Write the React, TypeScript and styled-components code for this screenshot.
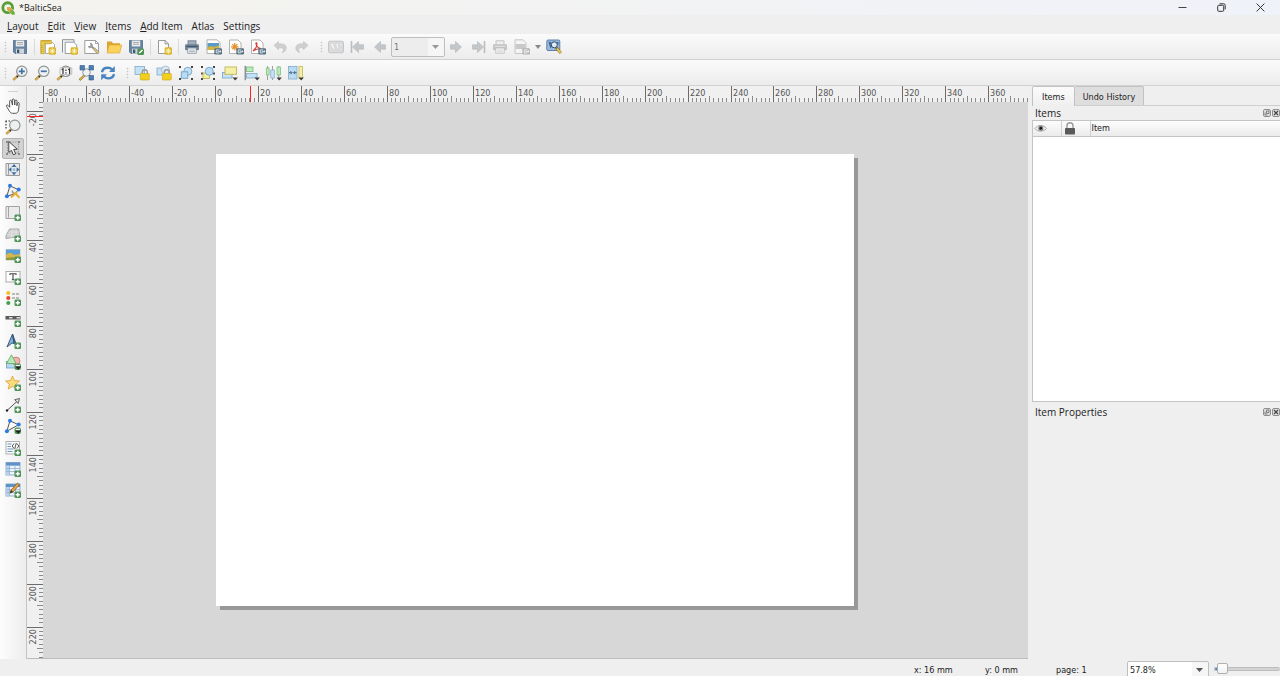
import React, { useLayoutEffect, useRef, useState } from "react";
import styled, { createGlobalStyle, css } from "styled-components";

const ui = '"Open Sans", "Noto Sans", sans-serif';
const small = '"DejaVu Sans Condensed", "DejaVu Sans", sans-serif';

const Global = createGlobalStyle`
  * { box-sizing: border-box; }
  body { margin: 0; background: #efefef; color: #222; font: 10px/14px ${ui}; }
  button, select, input { font: inherit; color: inherit; margin: 0; padding: 0; }
`;

/* ---------- layout ---------- */
const Window = styled.div`
  display: flex;
  flex-direction: column;
  min-height: 100vh;
  overflow: hidden;
`;
const TitleBar = styled.header`
  display: flex;
  align-items: center;
  height: 15px;
  padding-left: 1px;
  background: linear-gradient(90deg, #f4f3ee, #f0f2f9);
`;
const Title = styled.h1`
  flex: 1;
  margin: 0;
  padding-left: 4px;
  font-size: 9px;
  font-weight: 400;
`;
const WindowButton = styled.button`
  display: grid;
  place-items: center;
  width: 39px;
  height: 15px;
  border: 0;
  background: none;
`;
const MenuBar = styled.nav`
  display: flex;
  gap: 9px;
  height: 19px;
  padding: 4px 7px 1px;
`;
const MenuItem = styled.button`
  border: 0;
  background: none;
  line-height: 14px;
`;
const MenuKey = styled.u`
  text-underline-offset: 1px;
`;
const Toolbar = styled.div`
  display: flex;
  gap: 3px;
  height: 26px;
  border-bottom: 1px solid #d2d2d2;
  background: linear-gradient(#fbfbfb, #ececec);
`;
const ToolGroup = styled.div`
  display: flex;
  align-items: center;
`;
const Grip = styled.span`
  width: 9px;
  height: 14px;
  background: radial-gradient(#c9c9c9 40%, transparent 50%) 0 0 / 3px 3px content-box;
  padding: 1px 2px 1px 4px;
`;
const Separator = styled.span`
  width: 3px;
  height: 16px;
  border-left: 1px solid #dadada;
  margin-left: 3px;
`;
const IconButton = styled.button<{ $active?: boolean; $narrow?: boolean; $height?: number }>`
  display: grid;
  place-items: center;
  width: ${(p) => (p.$narrow ? 10 : 22)}px;
  height: ${(p) => p.$height ?? 22}px;
  border: 1px solid transparent;
  border-radius: 2px;
  background: none;
  ${(p) =>
    p.$active &&
    css`
      background: #d2d2d2;
      border-color: #b4b4b4;
    `}
`;
const Svg = styled.svg`
  display: block;
  overflow: visible;
`;
const Main = styled.main`
  flex: 1;
  display: flex;
`;
const SideTools = styled.div`
  width: 27px;
  border-right: 1px solid #c4c4c4;
  background: linear-gradient(90deg, #fdfdfd, #ededed);
`;
const SideGrip = styled.div`
  height: 9px;
  margin: 0 8px;
  background: radial-gradient(#d2d2d2 40%, transparent 50%) 0 0 / 2px 3px content-box;
  padding: 4px 0 2px;
`;
const SideList = styled.div`
  display: grid;
  grid-template-rows: repeat(19, 1fr);
  align-items: center;
  justify-content: center;
  height: 406px;
`;
const Workspace = styled.section`
  flex: 1;
  display: grid;
  grid-template: 16px 1fr / 16px 1fr;
  min-width: 0;
  border-bottom: 1px solid #bcbcbc;
`;
const RulerCorner = styled.div`
  background: #efefef;
`;
const RulerBox = styled.div<{ $vertical?: boolean }>`
  overflow: hidden;
  background: #f0f0f0;
  ${(p) => (p.$vertical ? "height: 0; min-height: 100%;" : "width: 0; min-width: 100%;")}
`;
const RulerSvg = styled.svg`
  display: block;
  font: 9px ${small};
  fill: #555;
`;
const Canvas = styled.div`
  padding: 52px 20px 52px 173px;
  background: #d7d7d7;
`;
const Paper = styled.div`
  width: 638px;
  height: 452px;
  background: #fff;
  box-shadow: 4px 4px 0 #989898;
`;
const Panels = styled.aside`
  display: flex;
  flex-direction: column;
  width: 252px;
  padding-left: 4px;
`;
const Tabs = styled.div`
  display: flex;
  align-items: flex-end;
  height: 20px;
  border-bottom: 1px solid #cfcfcf;
`;
const Tab = styled.button<{ $active?: boolean }>`
  height: ${(p) => (p.$active ? 20 : 19)}px;
  margin-bottom: ${(p) => (p.$active ? -1 : 0)}px;
  padding: 1px ${(p) => (p.$active ? 9 : 8)}px 0;
  border: 1px solid #c2c2c2;
  border-bottom: 0;
  border-left-width: ${(p) => (p.$active ? 1 : 0)}px;
  border-radius: 2px 2px 0 0;
  background: ${(p) => (p.$active ? "linear-gradient(#fbfbfb, #efefef)" : "#dedede")};
  font: 9px/14px ${small};
`;
const PanelHeader = styled.div`
  display: flex;
  align-items: center;
  gap: 1px;
  height: 14px;
  padding-left: 3px;
`;
const PanelTitle = styled.h2`
  flex: 1;
  margin: 0;
  font: 10px/14px ${ui};
`;
const PanelButton = styled.button`
  display: grid;
  place-items: center;
  width: 8px;
  height: 8px;
  border: 1px solid #8d8d8d;
  border-radius: 2px;
  background: #e2e2e2;
`;
const ItemsBox = styled.div`
  height: 282px;
  border: 1px solid #c4c4c4;
  border-right: 0;
  background: #fff;
`;
const ItemsTable = styled.table`
  width: 100%;
  border-collapse: collapse;
  table-layout: fixed;
  font: 9px/14px ${small};
`;
const HeadCell = styled.th<{ $width?: number }>`
  ${(p) => p.$width && `width: ${p.$width}px;`}
  height: 15px;
  padding: 0 1px;
  border-right: 1px solid #d0d0d0;
  border-bottom: 1px solid #c4c4c4;
  background: linear-gradient(#fdfdfd, #ebebeb);
  font-weight: 400;
  text-align: left;
  &:last-child { border-right: 0; }
`;
const Splitter = styled.div`
  width: 12px;
  height: 3px;
  margin: 0 auto;
  padding: 1px 0 0;
  background: radial-gradient(#bdbdbd 40%, transparent 50%) 0 0 / 2px 2px content-box;
`;
const StatusBar = styled.footer`
  display: flex;
  justify-content: flex-end;
  height: 17px;
  padding-top: 2px;
  overflow: hidden;
  font: 9px/18px ${small};
`;
const StatusText = styled.span<{ $width: number }>`
  width: ${(p) => p.$width}px;
  flex: none;
`;
const ComboBox = styled.label<{ $width: number; $height: number; $dim?: boolean }>`
  position: relative;
  flex: none;
  width: ${(p) => p.$width}px;
  height: ${(p) => p.$height}px;
  border: 1px solid #bebebe;
  border-radius: 2px;
  background: ${(p) => (p.$dim ? "linear-gradient(90deg, #ededed 70%, #f6f6f6 70%)" : "linear-gradient(90deg, #fff 80%, #f6f6f6 80%)")};
  color: ${(p) => (p.$dim ? "#777" : "#222")};
  font: 9px/14px ${small};
`;
const Select = styled.select`
  appearance: none;
  display: block;
  width: 100%;
  height: 100%;
  padding-left: 2px;
  border: 0;
  background: none;
  opacity: 1;
`;
const ComboArrow = styled.svg`
  position: absolute;
  right: 5px;
  top: calc(50% - 2px);
  pointer-events: none;
`;
const ZoomSlider = styled.input`
  appearance: none;
  flex: none;
  width: 66px;
  height: 16px;
  margin: 0 0 0 5px;
  background: none;
  &::-webkit-slider-runnable-track {
    height: 4px;
    border: 1px solid #bdbdbd;
    border-right: 0;
    border-radius: 2px;
    background: linear-gradient(90deg, #2f8ad8 6px, #d2d2d2 6px);
  }
  &::-webkit-slider-thumb {
    appearance: none;
    width: 11px;
    height: 11px;
    margin-top: -5px;
    border: 1px solid #b0b0b0;
    border-radius: 2px;
    background: linear-gradient(#fff, #f1f1f1);
  }
`;

/* ---------- icon parts ---------- */
const Plus = () => (
  <g>
    <rect x="9.5" y="9.5" width="6.5" height="6.5" rx="1.3" fill="#4e9258" />
    <path d="M12.75 10.7v4.1M10.7 12.75h4.1" stroke="#fff" strokeWidth="1.5" />
  </g>
);
const GreenDrop = () => (
  <g>
    <rect x="9.5" y="9.5" width="6.5" height="6.5" rx="2" fill="#4e9258" />
    <path d="M10.7 11.5h4.2" stroke="#fff" strokeWidth="1.3" />
    <path d="M10.2 12.6h6l-3 3.2z" fill="#222" />
  </g>
);
const Star = () => (
  <g>
    <rect x="8.6" y="8.3" width="7.4" height="7.4" rx="1.4" fill="#d9b62c" />
    <path d="M12.3 9.2v5.6M9.5 12h5.6M10.3 10l4 4M14.3 10l-4 4" stroke="#fff8cf" strokeWidth=".9" />
  </g>
);
const Export = ({ c = "#546f82" }: { c?: string }) => (
  <g>
    <rect x="8.3" y="9.3" width="7.7" height="6.2" rx="1.2" fill={c} />
    <path d="M13 10.9h-2.8v3h2.8M11.6 12.4h3.2M13.7 11l1.4 1.4-1.4 1.4" fill="none" stroke="#fff" strokeWidth=".8" />
  </g>
);
const Sheet = ({ s = "#8e8e8e" }: { s?: string }) => (
  <path d="M2.5 1.5h6.7l3.3 3.3v9.7h-10zM9 1.5v3.4h3.5" fill="#fff" stroke={s} strokeWidth=".9" />
);
const Lens = ({ children }: { children?: React.ReactNode }) => (
  <g>
    <path d="M5.6 9.8l1.2 1.2-4.6 4.4-1.4-1.3z" fill="#e2b33c" stroke="#8d7330" strokeWidth=".5" />
    <path d="M4.6 10.8L6 12.2" stroke="#333" strokeWidth="1.4" />
    <circle cx="9.8" cy="6.3" r="5.2" fill="#eef1f2" stroke="#8f9494" strokeWidth="1.2" />
    {children}
  </g>
);
const Drop = () => <path d="M10.500 12.500h5.400l-2.700 3z" fill="#3c3c3c" />;
const Corners = ({ c = "#444" }: { c?: string }) => (
  <path d="M1 1h2v2H1zM13 1h2v2h-2zM1 13h2v2H1zM13 13h2v2h-2z" fill={c} />
);
const Floppy = () => (
  <g>
    <path d="M1.500 1.500h13v13h-11.500l-1.500-1.500z" fill="#6785a3" stroke="#4f6b87" strokeWidth=".8" />
    <rect x="3.800" y="1.500" width="8.400" height="6" fill="#e9ecec" />
    <path d="M5 3.500h6M5 5.300h6" stroke="#9a9a9a" strokeWidth=".8" />
    <rect x="4" y="9.700" width="8" height="5" fill="#cfd6db" />
    <rect x="5" y="10.500" width="2.300" height="3.500" fill="#3e5973" />
  </g>
);
const Printer = ({ dim }: { dim?: boolean }) => (
  <g>
    <rect x="4" y="1.800" width="8" height="4.500" fill={dim ? "#eee" : "#a3b0ba"} stroke={dim ? "#bbb" : "#667a8c"} strokeWidth=".8" />
    <rect x="1" y="5.300" width="14" height="6" rx="1.200" fill={dim ? "#c4c4c4" : "#6f8498"} />
    <path d="M2.500 7.400h11" stroke={dim ? "#e6e6e6" : "#3d5266"} />
    <rect x="3.800" y="9" width="8.400" height="5.200" fill="#f6f6f6" stroke={dim ? "#bbb" : "#7a8b99"} strokeWidth=".8" />
    <path d="M5.200 11h5.600M5.200 12.600h5.600" stroke={dim ? "#ccc" : "#8d9aa5"} strokeWidth=".7" />
  </g>
);
const Padlock = () => (
  <g>
    <path d="M8.300 9V7.300a2.500 2.500 0 015 0V9" fill="none" stroke="#9a9a9a" strokeWidth="1.400" />
    <rect x="6.300" y="8.500" width="9" height="6.500" rx=".8" fill="#f3cf1d" stroke="#c9a50e" strokeWidth=".6" />
  </g>
);
const Arrow = ({ flip, bar }: { flip?: boolean; bar?: boolean }) => (
  <g transform={flip ? "matrix(-1 0 0 1 16 0)" : undefined}>
    <path d="M2.500 8l6-5.500v3.300h5v4.400h-5v3.300z" fill="#c3c7ca" stroke="#b3b6b8" strokeWidth=".6" />
    {bar && <path d="M1.500 2v12" stroke="#b9bdbf" strokeWidth="1.600" />}
  </g>
);
const WorldMap = () => (
  <g>
    <rect x=".5" y="2.200" width="15" height="11.600" rx="1.500" fill="#d9dbdc" stroke="#bfc1c2" strokeWidth=".9" />
    <path d="M3 4.300l3 .2-.6 2 1.300 2.300-.8 2.800-1.300-2.500L3 7zM8.500 4.500l2-.3-.5 2 1 2-1 3-1-3.200-1-1.500zM11.500 4.500h2l-.3 4-1-1z" fill="#f7f7f7" stroke="#c4c4c4" strokeWidth=".4" />
  </g>
);

const icons: Record<string, React.ReactNode> = {
  save: <Floppy />,
  newLayout: (
    <g>
      <path d="M5.500 3.500h7l2 2v9h-9z" fill="#fff" stroke="#999" strokeWidth=".8" />
      <path d="M.800 1.500h10.500v3.200H4.200v10H.800z" fill="#f0cf55" stroke="#c39d25" strokeWidth=".8" />
      <path d="M3 1.700v1.600M5 1.700v1.600M7 1.700v1.600M9 1.700v1.600M1 6.500h1.600M1 8.500h1.600M1 10.500h1.600M1 12.500h1.600" stroke="#a07e15" strokeWidth=".6" />
      <Star />
    </g>
  ),
  duplicate: (
    <g>
      <path d="M.500 13.500V.700h11.500v3" fill="#f3f4f4" stroke="#8a9196" strokeWidth="1" />
      <path d="M3.200 3.200h8.500l3 3v8.300H3.200z" fill="#fff" stroke="#8a9196" strokeWidth=".9" />
      <Star />
    </g>
  ),
  manager: (
    <g>
      <path d="M.800 1.500h10.700l3 3v10H.800z" fill="#fff" stroke="#929292" strokeWidth=".9" />
      <path d="M11.500 1.500v3h3" fill="none" stroke="#929292" strokeWidth=".8" />
      <path d="M6.200 4.200a2.300 2.300 0 11-2 3.400l2-.2.8-1.500z" fill="#a9a9a9" stroke="#777" strokeWidth=".6" />
      <path d="M8 8l2.500 2" stroke="#8b8b8b" strokeWidth="1.800" />
      <path d="M10 9.500l4.600 4.800" stroke="#9a9a9a" strokeWidth="2.800" />
      <path d="M10 9.500l4.600 4.800" stroke="#e2c46a" strokeWidth="1.300" />
    </g>
  ),
  open: (
    <g>
      <path d="M1 2.500h4.500L7 4.200h7V13H1z" fill="#dba52f" />
      <path d="M3.200 6h12.500l-2 8H1z" fill="#fbd25e" stroke="#dca935" strokeWidth=".7" />
    </g>
  ),
  saveTemplate: (
    <g>
      <Floppy />
      <rect x="9.300" y="9.500" width="6.700" height="6.500" rx="1.300" fill="#4e9258" />
      <path d="M10.800 14.500l.5-1.600 2.700-2.500 1 1-2.700 2.500z" fill="#fff" />
    </g>
  ),
  newPage: <g><Sheet /><Star /></g>,
  print: <Printer />,
  exportImage: (
    <g>
      <path d="M1 .800h10l3 3v10.700H1z" fill="#fff" stroke="#a0a0a0" strokeWidth=".8" />
      <rect x="1.500" y="4" width="11.500" height="7" fill="#5d9bc7" />
      <path d="M1.500 8.500l3-1.500 3.500 1 5-1.500V11H1.500z" fill="#d3b544" />
      <Export />
    </g>
  ),
  exportSvg: (
    <g>
      <path d="M1.500 1h8.500l3 3v10.500H1.500z" fill="#fff" stroke="#a0a0a0" strokeWidth=".8" />
      <path d="M6.800 4v7.500M3 7.800h7.600M4.200 5.100l5.200 5.200M9.400 5.100l-5.200 5.200" stroke="#e8912c" strokeWidth="1.300" />
      <Export />
    </g>
  ),
  exportPdf: (
    <g>
      <path d="M1.500 1h8.500l3 3v10.500H1.500z" fill="#fff" stroke="#a0a0a0" strokeWidth=".8" />
      <path d="M3 12c2.300-1.800 4-4.800 3.900-7.500 0-1-1.100-1-1 0 .4 2.500 2.100 4.500 5.100 5-2.500 0-5.500.9-8 2.500z" fill="none" stroke="#d5392f" strokeWidth="1.100" />
      <Export />
    </g>
  ),
  undo: <path d="M2 6.300L6.500 2.500v2.400h3.200c3 0 4.500 2 4.500 4.200 0 2.300-1.700 4-4.200 4.400 1.300-1 1.700-2 1.400-3-.2-1.200-1-1.700-2.200-1.700H6.500v2z" fill="#cfcfcf" stroke="#bdbdbd" strokeWidth=".6" />,
  redo: <path d="M14 6.300L9.500 2.500v2.400H6.300c-3 0-4.500 2-4.500 4.200 0 2.300 1.700 4 4.200 4.400-1.300-1-1.700-2-1.400-3 .2-1.200 1-1.700 2.200-1.700h2.700v2z" fill="#cfcfcf" stroke="#bdbdbd" strokeWidth=".6" />,
  atlas: <WorldMap />,
  first: <Arrow bar />,
  previous: <Arrow />,
  next: <Arrow flip />,
  last: <Arrow flip bar />,
  printAtlas: <Printer dim />,
  exportAtlas: (
    <g>
      <path d="M1 .800h8l3 3v10.700H1z" fill="#f4f4f4" stroke="#bbb" strokeWidth=".8" />
      <rect x="1.500" y="5" width="10" height="5" fill="#c9c9c9" />
      <Export c="#b4b4b4" />
    </g>
  ),
  atlasSettings: (
    <g>
      <rect x=".8" y="1" width="13" height="10.500" rx="1.200" fill="#9dbade" stroke="#4d77a8" strokeWidth=".9" />
      <path d="M2.500 2.800l3 .2-.8 2 1 3-1.200 1.500-1-3zM10 3h2.500v3z" fill="#40658f" />
      <circle cx="8.300" cy="5.800" r="3" fill="#dfe9f3" stroke="#2f4d6e" strokeWidth="1" />
      <path d="M10.200 8.500l4.600 5.700" stroke="#857030" strokeWidth="2.800" />
      <path d="M11 9.500l3.700 4.600" stroke="#edc957" strokeWidth="1.800" />
    </g>
  ),
  zoomIn: <Lens><path d="M9.800 3.300v6M6.800 6.300h6" stroke="#4373a6" strokeWidth="1.700" /></Lens>,
  zoomOut: <Lens><path d="M6.800 6.300h6" stroke="#4373a6" strokeWidth="1.700" /></Lens>,
  zoomActual: (
    <Lens>
      <rect x="4" y="2.600" width="11.800" height="7" rx="1" fill="#f7f7f7" stroke="#999" strokeWidth=".6" />
      <path d="M5.600 4.700l1.400-.8v5M12.200 4.700l1.400-.8v5" fill="none" stroke="#333" strokeWidth="1.200" />
      <path d="M9.900 4.600v1.300M9.900 7.200v1.300" stroke="#333" strokeWidth="1.200" />
    </Lens>
  ),
  zoomFull: (
    <g>
      <path d="M4 4l9 8.500M13 4l-9 8.500" stroke="#9aaab8" />
      <circle cx="8.500" cy="7.500" r="3.800" fill="#eef1f2" stroke="#8f9494" />
      <path d="M2 .500h4.500v4.500H2zM11 .500h4.500v4.500H11zM11 10.500h4.500V15H11z" fill="#4f7eae" stroke="#2f5d8e" strokeWidth=".6" />
      <path d="M5.500 10.300l1.200 1.200-4.300 4-1.400-1.300z" fill="#e2b33c" stroke="#77642b" strokeWidth=".6" />
    </g>
  ),
  refresh: (
    <g fill="none" stroke="#4984c0" strokeWidth="2.400">
      <path d="M2 7.200C2.500 4.500 5 2.800 7.800 2.800c1.800 0 3.200.6 4.200 1.800M14 9c-.5 2.700-3 4.400-5.800 4.400-1.800 0-3.200-.6-4.200-1.800" />
      <path d="M14.800 1v6H9zM1.200 15.200v-6H7z" fill="#4984c0" stroke="none" />
    </g>
  ),
  lock: (
    <g>
      <rect x="1" y="1.500" width="9.500" height="8" fill="#c5e2f5" stroke="#7faac8" strokeWidth=".8" />
      <Padlock />
    </g>
  ),
  unlock: (
    <g>
      <rect x="1" y="3" width="7" height="7" fill="#c5e2f5" stroke="#7faac8" strokeWidth=".8" />
      <circle cx="9.500" cy="5" r="4" fill="#dbeaf3" stroke="#9fb6c6" strokeWidth=".8" />
      <Padlock />
    </g>
  ),
  group: (
    <g>
      <Corners />
      <circle cx="9.800" cy="6.300" r="4" fill="#c5e2f5" stroke="#6fa3c8" strokeWidth=".9" />
      <rect x="3.300" y="6.800" width="6.500" height="6.500" fill="#b9dcf4" stroke="#6fa3c8" strokeWidth=".9" />
    </g>
  ),
  ungroup: (
    <g>
      <Corners />
      <path d="M1 7.500h2v2H1zM13 7.500h2v2h-2z" fill="#555" />
      <rect x="3" y="8" width="6.500" height="5.500" fill="#f3ee9b" stroke="#b7ae45" strokeWidth=".8" />
      <circle cx="9.300" cy="6.300" r="4" fill="#b9dcf4" stroke="#6fa3c8" strokeWidth=".9" />
    </g>
  ),
  raise: (
    <g>
      <rect x=".5" y="7.500" width="9.500" height="5.500" fill="#c5e2f5" stroke="#7faac8" strokeWidth=".9" />
      <rect x="3" y="2" width="11.500" height="7.300" fill="#f5f0a8" stroke="#c0b654" strokeWidth=".9" />
      <Drop />
    </g>
  ),
  align: (
    <g>
      <path d="M1.200 .800v14.400" stroke="#555" strokeWidth=".9" />
      <rect x="2.500" y="2" width="6.500" height="4.500" fill="#b8ecb9" stroke="#7bb77d" strokeWidth=".8" />
      <rect x="2.500" y="8.500" width="10.500" height="4.500" fill="#c5e2f5" stroke="#7faac8" strokeWidth=".8" />
      <Drop />
    </g>
  ),
  distribute: (
    <g>
      <path d="M1.500 1v14M6.500 1v14M12.700 1v14" stroke="#888" strokeWidth=".8" />
      <rect x=".3" y="3" width="2.800" height="7" fill="#b8ecb9" stroke="#7bb77d" strokeWidth=".7" />
      <rect x="4.800" y="5" width="3.500" height="8" fill="#c5e2f5" stroke="#7faac8" strokeWidth=".7" />
      <rect x="11" y="2" width="3.500" height="8" fill="#b8ecb9" stroke="#7bb77d" strokeWidth=".7" />
      <Drop />
    </g>
  ),
  resize: (
    <g>
      <rect x=".5" y="1.500" width="8.500" height="12.500" fill="#b9dcf4" stroke="#7faac8" strokeWidth=".8" />
      <path d="M1 7.700h2.500M8.500 7.700H6M2.500 6.200L4 7.700 2.500 9.200M7 6.200L5.500 7.700 7 9.200" fill="none" stroke="#34516a" strokeWidth=".9" />
      <rect x="11" y="1.500" width="3.500" height="12" fill="#f5f0a8" stroke="#c0b654" strokeWidth=".8" />
      <Drop />
    </g>
  ),
  pan: (
    <path d="M4.700 9.300L3 7.300C2.300 6.500.9 7.200 1.500 8.300l2.700 4.500c.8 1.500 1.800 2.500 3.500 2.500h2.500c2 0 3-1.200 3.300-3.200l.7-6.400c.2-1.400-1.500-1.600-1.800-.3l-.5 2.400.1-4.700c0-1.400-1.900-1.400-2 0L9.800 7 9.300 1.900C9.100.500 7.300.700 7.300 2l.2 5.100L6.500 3c-.3-1.300-2.100-.9-1.900.4z" fill="#fff" stroke="#444" strokeWidth=".9" />
  ),
  zoom: (
    <g>
      <path d="M.500 2h6M1 2v9" stroke="#333" strokeWidth="1.200" strokeDasharray="1.500 1.500" />
      <Lens />
    </g>
  ),
  select: (
    <g>
      <rect x="2.500" y="2" width="11" height="11" fill="none" stroke="#888" strokeWidth=".7" strokeDasharray="1.500 1" />
      <Corners c="#8a8a8a" />
      <path d="M3.800 1.500v10.800l2.700-2 1.900 4.500 2.300-1-2-4.300 3.500-.3z" fill="#fff" stroke="#333" strokeWidth=".9" />
    </g>
  ),
  moveContent: (
    <g>
      <path d="M3.500 1.500h11v12h-12M3.500 1.500v10.300M3.500 1.500H1v12c1.500.2 2.500-.5 2.500-1.800" fill="#e7e9ea" stroke="#8f8f8f" strokeWidth=".9" />
      <path d="M9 2.100l2.500 2.900h-5zM9 13.200l2.500-2.900h-5zM3.500 7.600l2.900-2.400V10zM14.500 7.600l-2.900-2.400V10z" fill="#3d6d9f" />
      <rect x="7.700" y="6.300" width="2.600" height="2.600" fill="#9cb9d6" />
    </g>
  ),
  editNodes: (
    <g>
      <path d="M5 2.800l8.500 4-4 4-7.700 2.500z" fill="#f2f2f2" stroke="#555" strokeWidth="1" />
      <circle cx="5" cy="2.800" r="2" fill="#2d7be0" />
      <circle cx="13.700" cy="6.500" r="2" fill="#2d7be0" />
      <circle cx="1.900" cy="13.300" r="2" fill="#2d7be0" />
      <path d="M7.500 7.500a2.400 2.400 0 003 3" fill="none" stroke="#999" strokeWidth="1.600" />
      <path d="M9.500 9.500l5 5.200M12 9l-6 5.500" stroke="#e3ae35" strokeWidth="2" />
    </g>
  ),
  addMap: (
    <g>
      <path d="M3.500 1.500h11v12h-12M3.500 1.500v10.300M3.500 1.500H1v12c1.500.2 2.500-.5 2.500-1.800" fill="#ebebeb" stroke="#9a9a9a" strokeWidth=".9" />
      <Plus />
    </g>
  ),
  add3d: (
    <g>
      <path d="M4.500 3h9.300l1 7.500L1 12.500v-3z" fill="#cfcfcf" stroke="#9a9a9a" strokeWidth=".8" />
      <path d="M3.500 6h10.700M2.300 9h12M8 3l-2 9M11 3v8" stroke="#f0f0f0" strokeWidth=".6" />
      <Plus />
    </g>
  ),
  addPicture: (
    <g>
      <rect x="1" y="2.500" width="14" height="10.500" fill="#5aa0d6" stroke="#8aa2b3" strokeWidth=".5" />
      <path d="M1 8c3-3 5-2 7-.8s4 .3 7-.2v6H1z" fill="#d8b64c" />
      <path d="M1 11c4-1 9-1 14 0v2H1z" fill="#8b9b3d" />
      <Plus />
    </g>
  ),
  addLabel: (
    <g>
      <rect x="1" y="2.500" width="14" height="10.500" fill="#fdfdfd" stroke="#a5a5a5" strokeWidth=".9" />
      <path d="M5 6V4.800h6V6M8 4.800v6M6.800 10.800h2.500" fill="none" stroke="#444" strokeWidth="1.100" />
      <Plus />
    </g>
  ),
  addLegend: (
    <g>
      <circle cx="3.300" cy="3" r="2.100" fill="#f2c12e" />
      <circle cx="3.300" cy="8" r="2.100" fill="#e04a2b" />
      <circle cx="3.300" cy="13" r="2.100" fill="#42a04e" />
      <path d="M7 4h3M11 4h3M7 8h3M11 8h3" stroke="#a5a5a5" strokeWidth="1.300" />
      <Plus />
    </g>
  ),
  addScale: (
    <g>
      <rect x=".5" y="5" width="15" height="3.500" fill="#5a5a5a" />
      <path d="M4 6.700h3.500M11.500 6.700H15" stroke="#d8d8d8" strokeWidth="1.500" />
      <Plus />
    </g>
  ),
  addNorth: (
    <g>
      <path d="M7.500 1L2 14l5-4 2 .5z" fill="#7fb2dc" stroke="#2f4f70" strokeWidth=".9" />
      <path d="M7.500 1l4.500 12-3-2.800z" fill="#3c6794" stroke="#2f4f70" strokeWidth=".8" />
      <Plus />
    </g>
  ),
  addShape: (
    <g>
      <rect x="1.500" y="7.500" width="10" height="6.500" fill="#b6d9f1" stroke="#6f9fc4" strokeWidth=".8" />
      <circle cx="11" cy="7" r="4" fill="#f1b3ad" stroke="#c9716a" strokeWidth=".8" />
      <path d="M6.500 .800l4.500 8.700H1.500z" fill="#b8e8b7" stroke="#5eaa62" strokeWidth=".8" />
      <GreenDrop />
    </g>
  ),
  addMarker: (
    <g>
      <path d="M7.500 1l2 4.600 5 .4-3.800 3.200 1.200 4.900-4.400-2.700-4.300 2.700L4.400 9.200.6 6l4.900-.4z" fill="#fbdc7c" stroke="#dba63f" strokeWidth=".9" />
      <Plus />
    </g>
  ),
  addArrow: (
    <g>
      <path d="M2 13.500L13 3.500" stroke="#555" strokeWidth="1" />
      <path d="M14.500 1.500l-1.300 5-3.500-3.800z" fill="#ddd" stroke="#444" strokeWidth=".8" />
      <circle cx="2" cy="13.500" r="1.200" fill="#222" />
      <Plus />
    </g>
  ),
  addNode: (
    <g>
      <path d="M5 2.800l8.500 4-11.700 6.500z" fill="#fafafa" stroke="#555" strokeWidth="1" />
      <circle cx="5" cy="2.800" r="2" fill="#2d7be0" />
      <circle cx="13.700" cy="6.500" r="2" fill="#2d7be0" />
      <circle cx="1.900" cy="13.300" r="2" fill="#2d7be0" />
      <GreenDrop />
    </g>
  ),
  addHtml: (
    <g>
      <rect x="1" y="1.500" width="13.500" height="12.500" fill="#fafafa" stroke="#a0a0a0" strokeWidth=".8" />
      <path d="M2.500 4h4M2.500 6.500h3.500M2.500 9h6M2.500 11.500h5" stroke="#6e96bf" strokeWidth="1.200" />
      <path d="M9 3.500L7.200 6 9 8.500M12 3.500L13.800 6 12 8.500M11.300 3L9.700 9" fill="none" stroke="#444" strokeWidth=".9" />
      <Plus />
    </g>
  ),
  addTable: (
    <g>
      <rect x="1" y="1.500" width="14" height="12.500" fill="#eef4fa" stroke="#7d9dbd" strokeWidth=".8" />
      <rect x="1" y="1.500" width="14" height="3.200" fill="#5f93c8" />
      <rect x="1" y="4.700" width="3.500" height="9.300" fill="#b9d2ea" />
      <path d="M1 7.500h14M1 10.500h14M4.500 4.700v9.300M10 4.700v9.300" stroke="#8fb0d0" strokeWidth=".8" />
      <Plus />
    </g>
  ),
  addManualTable: (
    <g>
      <rect x="1" y="2" width="14" height="12" fill="#eef4fa" stroke="#7d9dbd" strokeWidth=".8" />
      <rect x="1" y="2" width="14" height="3" fill="#5f93c8" />
      <rect x="1" y="5" width="3.500" height="9" fill="#b9d2ea" />
      <path d="M1 7.700h14M1 10.700h14M4.500 5v9M10.500 5v9" stroke="#8fb0d0" strokeWidth=".8" />
      <path d="M5 11l1-3L12.500 1l2 1.800L8 10z" fill="#e9a23f" stroke="#6f522b" strokeWidth=".7" />
      <path d="M5 11l1-3 2 2z" fill="#333" />
      <Plus />
    </g>
  ),
};

type ToolProps = { name: string; label: string; active?: boolean; disabled?: boolean; height?: number };

function Tool({ name, label, active, disabled, height }: ToolProps) {
  return (
    <IconButton aria-label={label} $active={active} $height={height} disabled={disabled}>
      <Svg width="16" height="16" viewBox="0 0 16 16" aria-hidden="true">{icons[name]}</Svg>
    </IconButton>
  );
}

/* ---------- rulers ---------- */
const PX_PER_MM = 2.148;

type RulerProps = { origin: number; from: number; cursor: number; vertical?: boolean };

function Ruler({ origin, from, cursor, vertical }: RulerProps) {
  const box = useRef<HTMLDivElement>(null);
  const [length, setLength] = useState(0);

  useLayoutEffect(() => {
    const el = box.current;
    if (!el) return;
    const measure = () => setLength(vertical ? el.clientHeight : el.clientWidth);
    measure();
    const observer = new ResizeObserver(measure);
    observer.observe(el);
    return () => observer.disconnect();
  }, [vertical]);

  const marks: React.ReactNode[] = [];
  for (let mm = from; origin + mm * PX_PER_MM < length; mm += 2) {
    const p = Math.round(origin + mm * PX_PER_MM);
    const start = mm % 20 === 0 ? 0 : mm % 10 === 0 ? 10 : 12;
    const color = start === 0 ? "#6c6c6c" : "#8a8a8a";
    marks.push(
      vertical ? (
        <rect key={mm} x={start} y={p} width={16 - start} height="1" fill={color} />
      ) : (
        <rect key={mm} x={p} y={start} width="1" height={16 - start} fill={color} />
      ),
    );
    if (start === 0 && p + 20 < length) {
      marks.push(
        vertical ? (
          <text key={`t${mm}`} transform={`translate(9 ${p + 2}) rotate(-90)`} textAnchor="end">{mm}</text>
        ) : (
          <text key={`t${mm}`} x={p + 2} y="10">{mm}</text>
        ),
      );
    }
  }
  return (
    <RulerBox ref={box} $vertical={vertical}>
      <RulerSvg width={vertical ? 16 : length} height={vertical ? length : 16}>
        {marks}
        {vertical ? (
          <rect y={cursor} width="16" height="1" fill="#f22" />
        ) : (
          <rect x={cursor} width="1" height="16" fill="#f22" />
        )}
      </RulerSvg>
    </RulerBox>
  );
}

const PanelControls = () => (
  <>
    <PanelButton aria-label="Float panel">
      <svg width="6" height="6" viewBox="0 0 6 6"><path d="M2.500 1h2.500v2.500H2.500zM1 2.500V5h2.500" fill="none" stroke="#666" strokeWidth=".8" /></svg>
    </PanelButton>
    <PanelButton aria-label="Close panel">
      <svg width="6" height="6" viewBox="0 0 6 6"><path d="M1 1l4 4M5 1L1 5" stroke="#444" strokeWidth="1.200" /></svg>
    </PanelButton>
  </>
);

const menus: [string, boolean][] = [
  ["Layout", true], ["Edit", true], ["View", true], ["Items", true],
  ["Add Item", true], ["Atlas", false], ["Settings", false],
];

const sideTools: [string, string][] = [
  ["pan", "Pan layout"], ["zoom", "Zoom"], ["select", "Select/Move item"], ["moveContent", "Move item content"],
  ["editNodes", "Edit nodes item"], ["addMap", "Add map"], ["add3d", "Add 3D map"], ["addPicture", "Add picture"],
  ["addLabel", "Add label"], ["addLegend", "Add legend"], ["addScale", "Add scale bar"], ["addNorth", "Add north arrow"],
  ["addShape", "Add shape"], ["addMarker", "Add marker"], ["addArrow", "Add arrow"], ["addNode", "Add node item"],
  ["addHtml", "Add HTML"], ["addTable", "Add attribute table"], ["addManualTable", "Add fixed table"],
];

export default function App() {
  return (
    <Window>
      <Global />
      <TitleBar>
        <Svg width="14" height="14" viewBox="0 0 14 14" aria-hidden="true">
          <circle cx="6.700" cy="6.700" r="4.900" fill="none" stroke="#5a9e3a" strokeWidth="2.900" />
          <path d="M6 6h3l5 5.200V14h-2.800L6 8.700z" fill="#6fb13f" stroke="#f4f3ee" strokeWidth=".5" />
          <path d="M6.200 6.200h2.500L11 8.600 8.700 11 6.200 8.500z" fill="#e8a33a" />
        </Svg>
        <Title>*BalticSea</Title>
        <WindowButton aria-label="Minimize">
          <svg width="9" height="9" viewBox="0 0 9 9"><path d="M.500 4.500h8" stroke="#444" /></svg>
        </WindowButton>
        <WindowButton aria-label="Restore">
          <svg width="9" height="9" viewBox="0 0 9 9" fill="none" stroke="#333"><rect x=".7" y="2.300" width="6" height="6" rx="1" /><path d="M2.500.800h4.200a1.500 1.500 0 011.500 1.500v4" /></svg>
        </WindowButton>
        <WindowButton aria-label="Close">
          <svg width="9" height="9" viewBox="0 0 9 9"><path d="M.600.600l7.800 7.800M8.400.600L.600 8.400" stroke="#333" /></svg>
        </WindowButton>
      </TitleBar>
      <MenuBar>
        {menus.map(([name, key]) => (
          <MenuItem key={name}>
            {key ? <><MenuKey>{name[0]}</MenuKey>{name.slice(1)}</> : name}
          </MenuItem>
        ))}
      </MenuBar>
      <Toolbar>
        <ToolGroup>
          <Grip />
          <Tool name="save" label="Save project" />
          <Separator />
          <Tool name="newLayout" label="New layout" />
          <Tool name="duplicate" label="Duplicate layout" />
          <Tool name="manager" label="Layout manager" />
          <Tool name="open" label="Add items from template" />
          <Tool name="saveTemplate" label="Save as template" />
          <Separator />
          <Tool name="newPage" label="Add pages" />
          <Separator />
          <Tool name="print" label="Print layout" />
          <Tool name="exportImage" label="Export as image" />
          <Tool name="exportSvg" label="Export as SVG" />
          <Tool name="exportPdf" label="Export as PDF" />
          <Tool name="undo" label="Undo" disabled />
          <Tool name="redo" label="Redo" disabled />
        </ToolGroup>
        <ToolGroup>
          <Grip />
          <Tool name="atlas" label="Preview atlas" disabled />
          <Tool name="first" label="First feature" disabled />
          <Tool name="previous" label="Previous feature" disabled />
          <ComboBox $width={54} $height={20} $dim>
            <Select aria-label="Atlas page" disabled><option>1</option></Select>
            <ComboArrow width="7" height="4" viewBox="0 0 7 4"><path d="M0 0h7L3.500 4z" fill="#999" /></ComboArrow>
          </ComboBox>
          <Tool name="next" label="Next feature" disabled />
          <Tool name="last" label="Last feature" disabled />
          <Tool name="printAtlas" label="Print atlas" disabled />
          <Tool name="exportAtlas" label="Export atlas" disabled />
          <IconButton $narrow aria-label="Export atlas options" disabled>
            <svg width="6" height="4" viewBox="0 0 6 4"><path d="M0 0h6L3 4z" fill="#888" /></svg>
          </IconButton>
          <Tool name="atlasSettings" label="Atlas settings" />
        </ToolGroup>
      </Toolbar>
      <Toolbar>
        <ToolGroup>
          <Grip />
          <Tool name="zoomIn" label="Zoom in" />
          <Tool name="zoomOut" label="Zoom out" />
          <Tool name="zoomActual" label="Zoom to 100%" />
          <Tool name="zoomFull" label="Zoom full" />
          <Tool name="refresh" label="Refresh view" />
        </ToolGroup>
        <ToolGroup>
          <Grip />
          <Tool name="lock" label="Lock selected items" />
          <Tool name="unlock" label="Unlock all items" />
          <Tool name="group" label="Group items" />
          <Tool name="ungroup" label="Ungroup items" />
          <Tool name="raise" label="Raise items" />
          <Tool name="align" label="Align items" />
          <Tool name="distribute" label="Distribute items" />
          <Tool name="resize" label="Resize items" />
        </ToolGroup>
      </Toolbar>
      <Main>
        <SideTools>
          <SideGrip />
          <SideList>
            {sideTools.map(([name, label]) => (
              <Tool key={name} name={name} label={label} height={21} active={name === "select"} />
            ))}
          </SideList>
        </SideTools>
        <Workspace>
          <RulerCorner />
          <Ruler origin={172} from={-80} cursor={207} />
          <Ruler origin={52} from={-24} cursor={14} vertical />
          <Canvas><Paper /></Canvas>
        </Workspace>
        <Panels>
          <Tabs>
            <Tab $active>Items</Tab>
            <Tab>Undo History</Tab>
          </Tabs>
          <PanelHeader><PanelTitle>Items</PanelTitle><PanelControls /></PanelHeader>
          <ItemsBox>
            <ItemsTable>
              <thead>
                <tr>
                  <HeadCell $width={28} aria-label="Visible">
                    <Svg width="14" height="12" viewBox="0 0 14 12">
                      <path d="M1 6.500C3.500 2.500 9.500 2.500 12.500 6.500 9.500 10 3.500 10 1 6.500z" fill="#f2f2f2" stroke="#999" strokeWidth=".9" />
                      <circle cx="6.800" cy="6.300" r="2.500" fill="#777" /><circle cx="6.800" cy="6.300" r="1.200" fill="#111" />
                    </Svg>
                  </HeadCell>
                  <HeadCell $width={29} aria-label="Locked">
                    <Svg width="14" height="12" viewBox="0 0 14 12">
                      <path d="M4 6V3.800a3 3 0 016 0V6" fill="none" stroke="#999" strokeWidth="1.400" />
                      <rect x="2" y="6" width="10" height="6.500" rx=".8" fill="#5a5a5a" />
                    </Svg>
                  </HeadCell>
                  <HeadCell>Item</HeadCell>
                </tr>
              </thead>
            </ItemsTable>
          </ItemsBox>
          <Splitter />
          <PanelHeader><PanelTitle>Item Properties</PanelTitle><PanelControls /></PanelHeader>
        </Panels>
      </Main>
      <StatusBar>
        <StatusText $width={71}>x: 16 mm</StatusText>
        <StatusText $width={71}>y: 0 mm</StatusText>
        <StatusText $width={71}>page: 1</StatusText>
        <ComboBox $width={82} $height={17}>
          <Select aria-label="Zoom level"><option>57.8%</option></Select>
          <ComboArrow width="7" height="4" viewBox="0 0 7 4"><path d="M0 0h7L3.500 4z" fill="#555" /></ComboArrow>
        </ComboBox>
        <ZoomSlider type="range" min="0" max="100" defaultValue="4" aria-label="Zoom" />
      </StatusBar>
    </Window>
  );
}
